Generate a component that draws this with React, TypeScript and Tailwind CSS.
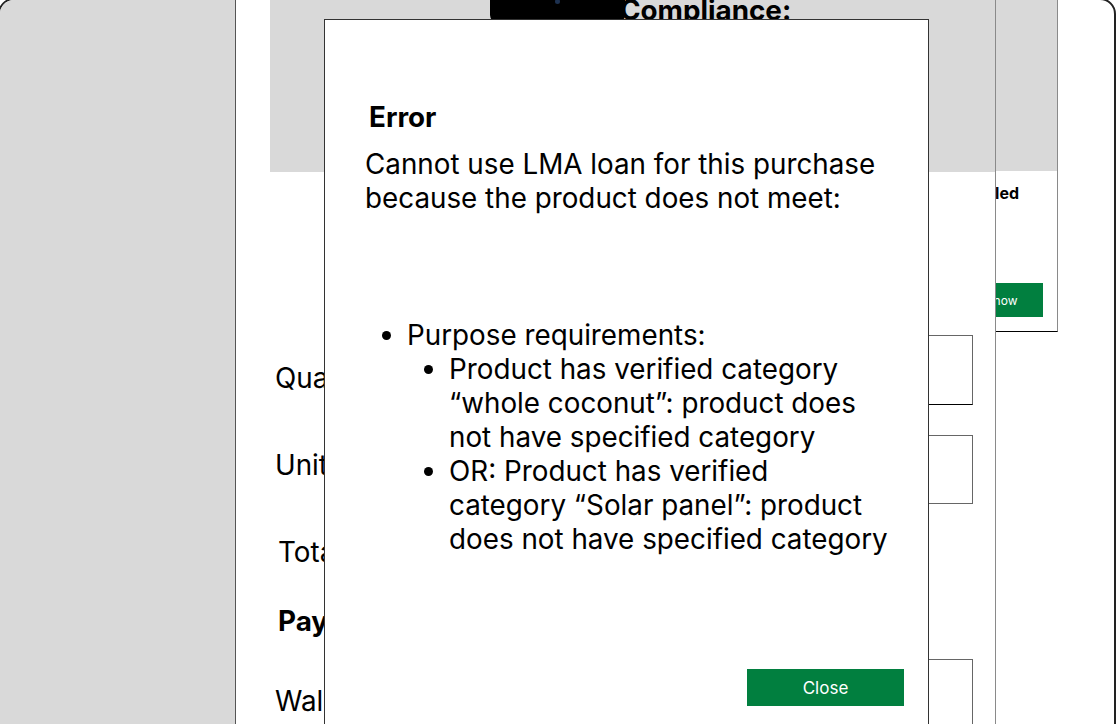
export default function App() {
  return (
    <div className="relative h-[724px] w-[1116px] overflow-hidden bg-white font-['Inter',sans-serif] text-black">
      {/* Device frame with the page behind the dialog */}
      <div className="-ml-[2px] -mt-[2px] flex h-[760px] w-[1118px] overflow-hidden rounded-t-[16px] border-2 border-[#222]">
        <div className="w-[235px] shrink-0 bg-[#d9d9d9]" />

        {/* Main page */}
        <div className="flex w-[761px] shrink-0 flex-col border-x border-l-[#555] border-r-[#8a8a8a] bg-white">
          <div className="ml-[34px] flex h-[172px] flex-col bg-[#d9d9d9]">
            <p className="-mt-[7px] pl-[350px] text-[27.8px] font-bold leading-[34px] whitespace-nowrap">Compliance:</p>
          </div>

          <div className="mt-[163px] flex h-[70px] items-start justify-between pl-[39px] pr-[22px]">
            <span className="mt-[26px] text-[27.8px] leading-[34px]">Quantity</span>
            <div className="h-[70px] w-[300px] border border-[#666] border-b-black" />
          </div>

          <div className="mt-[30px] flex h-[69px] items-start justify-between pl-[39px] pr-[22px]">
            <span className="mt-[13px] text-[27.8px] leading-[34px]">Unit price</span>
            <div className="h-[69px] w-[300px] border border-[#666]" />
          </div>

          <p className="mt-[31px] pl-[42px] text-[27.8px] leading-[34px]">Total</p>
          <p className="mt-[35px] pl-[42px] text-[27.8px] font-bold leading-[34px]">Payment</p>

          <div className="mt-[21px] flex items-start justify-between pl-[39px] pr-[22px]">
            <span className="mt-[25px] text-[27.8px] leading-[34px]">Wallet</span>
            <div className="h-[90px] w-[300px] border border-[#666]" />
          </div>
        </div>

        {/* Product card peeking from the right */}
        <div className="flex h-[332px] w-[62px] shrink-0 flex-col overflow-hidden border-b border-r border-b-black border-r-[#8a8a8a]">
          <div className="h-[171px] shrink-0 bg-[#d9d9d9]" />
          <div className="mt-[12px] flex justify-end pr-[38px]">
            <span className="shrink-0 whitespace-nowrap text-[16px] font-bold leading-[20px]">Enrolled</span>
          </div>
          <div className="mt-[80px] flex justify-end pr-[14px]">
            <button className="flex h-[34px] w-[100px] shrink-0 items-center justify-center bg-[#017f3f] pt-[1px] text-[12px] text-white">
              Buy now
            </button>
          </div>
        </div>
        <div className="flex-1" />
      </div>

      {/* Camera notch */}
      <div className="absolute left-[490px] top-0 flex h-[23px] w-[135px] justify-center rounded-b-[8px] bg-black">
        <span className="mt-[-1px] h-[5px] w-[5px] rounded-full bg-[#1d3150]" />
      </div>

      {/* Error dialog */}
      <div className="absolute left-[324px] top-[19px] flex h-[720px] w-[605px] flex-col border border-[#333] bg-white pl-[40px] pr-[24px] pt-[80px]">
        <h2 className="pl-[4px] text-[27.8px] font-bold leading-[34px]">Error</h2>
        <p className="mt-[13px] w-[530px] text-[27.8px] leading-[34px]">
          Cannot use LMA loan for this purchase because the product does not meet:
        </p>
        <ul className="mt-[103px] w-[530px] list-disc pl-[42px] text-[27.8px] leading-[34px]">
          <li>
            Purpose requirements:
            <ul className="list-disc pl-[42px]">
              <li>Product has verified category “whole coconut”: product does not have specified category</li>
              <li>
                OR: Product has verified
                <br />
                category “Solar panel”: product does not have specified category
              </li>
            </ul>
          </li>
        </ul>
        <button className="mt-[113px] flex h-[37px] w-[157px] items-center justify-center self-end bg-[#017f3f] pt-[2px] text-[17px] text-white">
          Close
        </button>
      </div>
    </div>
  );
}
